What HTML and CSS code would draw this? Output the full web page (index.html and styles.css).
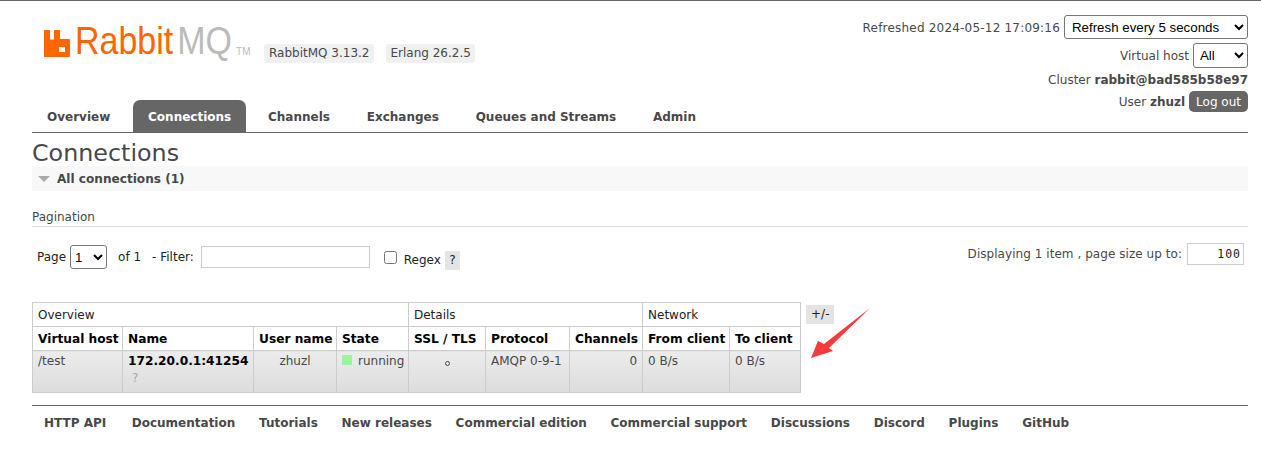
FILE: index.html
```html
<!DOCTYPE html>
<html lang="en">
<head>
    <meta charset="UTF-8">
    <title>RabbitMQ Management</title>
    <link rel="stylesheet" href="styles.css">
</head>
<body>
    <div class="header">
        <div class="brand">
            <div class="logo">
                <svg class="logo-mark" width="26" height="27" viewBox="0 3 26 27">
                    <path fill="#f60" fill-rule="evenodd" d="M0 3.500Q0 3 .5 3H5.500Q6 3 6 3.500V12.500H10V3.500Q10 3 10.500 3H15.500Q16 3 16 3.500V12H25.500Q26 12 26 12.500V29.500Q26 30 25.500 30H.5Q0 30 0 29.500ZM15 20V25H21V20Z"/>
                </svg>
                <span class="logo-word logo-rabbit">Rabbit</span>
                <span class="logo-word logo-mq">MQ</span>
                <span class="logo-tm">TM</span>
            </div>
            <span class="version">RabbitMQ 3.13.2</span>
            <span class="version">Erlang 26.2.5</span>
        </div>
        <div class="status">
            <div class="status-row">
                <span class="refreshed">Refreshed 2024-05-12 17:09:16</span>
                <select class="refresh-select"><option>Refresh every 5 seconds</option></select>
            </div>
            <div class="status-row">
                <span>Virtual host</span>
                <select class="vhost-select"><option>All</option></select>
            </div>
            <div class="status-row cluster-row">
                <span>Cluster <b>rabbit@bad585b58e97</b></span>
            </div>
            <div class="status-row user-row">
                <span>User <b>zhuzl</b></span>
                <button class="logout" type="button">Log out</button>
            </div>
        </div>
    </div>

    <!-- Navigation -->
    <div class="tabs">
        <a href="#">Overview</a>
        <a href="#" class="selected">Connections</a>
        <a href="#">Channels</a>
        <a href="#">Exchanges</a>
        <a href="#">Queues and Streams</a>
        <a href="#">Admin</a>
    </div>

    <div class="main">
        <h1>Connections</h1>
        <div class="section-title"><span class="triangle"></span>All connections (1)</div>

        <h3>Pagination</h3>
        <div class="pagination">
            <div class="page-left">
                <label class="page-label">Page</label>
                <select class="page-select"><option>1</option></select>
                <span class="page-of">of 1</span>
                <span class="page-filter">- Filter:</span>
                <input class="filter-input" type="text">
                <input class="regex-check" type="checkbox">
                <span class="regex-label">Regex</span>
                <span class="help">?</span>
            </div>
            <div class="page-right">
                <span class="page-count">Displaying 1 item , page size up to:</span>
                <input class="size-input" type="text" value="100">
            </div>
        </div>

        <div class="table-wrap">
            <table>
                <colgroup>
                    <col class="c-vhost"><col class="c-name"><col class="c-user"><col class="c-state">
                    <col class="c-ssl"><col class="c-proto"><col class="c-chan">
                    <col class="c-from"><col class="c-to">
                </colgroup>
                <thead>
                    <tr class="group-row">
                        <th colspan="4">Overview</th>
                        <th colspan="3">Details</th>
                        <th colspan="2">Network</th>
                    </tr>
                    <tr class="head-row">
                        <th>Virtual host</th>
                        <th>Name</th>
                        <th>User name</th>
                        <th>State</th>
                        <th>SSL / TLS</th>
                        <th>Protocol</th>
                        <th>Channels</th>
                        <th>From client</th>
                        <th>To client</th>
                    </tr>
                </thead>
                <tbody>
                    <tr>
                        <td>/test</td>
                        <td><b class="conn-name">172.20.0.1:41254</b><div class="conn-sub">?</div></td>
                        <td class="center">zhuzl</td>
                        <td><span class="state-dot"></span>running</td>
                        <td class="center"><span class="ssl-mark"></span></td>
                        <td>AMQP 0-9-1</td>
                        <td class="right">0</td>
                        <td>0 B/s</td>
                        <td>0 B/s</td>
                    </tr>
                </tbody>
            </table>
            <span class="plus-minus">+/-</span>
            <svg class="arrow" width="62" height="53" viewBox="0 0 62 53">
                <path fill="#f73a3a" d="M60 1L14 37L8 34L1 51L23 44L19 41Z"/>
            </svg>
        </div>
    </div>

    <div class="footer">
        <a href="#">HTTP API</a>
        <a href="#">Documentation</a>
        <a href="#">Tutorials</a>
        <a href="#">New releases</a>
        <a href="#">Commercial edition</a>
        <a href="#">Commercial support</a>
        <a href="#">Discussions</a>
        <a href="#">Discord</a>
        <a href="#">Plugins</a>
        <a href="#">GitHub</a>
    </div>
</body>
</html>
```

FILE: styles.css
```css
body {
    margin: 0;
    padding: 0;
    border-top: 1px solid #666;
    background-color: #fff;
    color: #484848;
    font-family: "DejaVu Sans", Verdana, sans-serif;
    font-size: 12px;
}
b {
    font-weight: bold;
}
.header {
    display: flex;
    justify-content: space-between;
    height: 99px;
    margin: 0 13px 0 32px;
}
.brand {
    display: flex;
    align-items: flex-start;
    padding-top: 26px;
}
.logo {
    display: flex;
    flex: none;
    align-items: flex-end;
    width: 208px;
    height: 30px;
    margin: 0 12px;
    font-family: "Liberation Sans", Arial, sans-serif;
}
.logo-mark {
    flex: none;
    margin-right: 5px;
}
.logo-word {
    font-size: 34px;
    line-height: 30px;
    height: 30px;
    transform: scaleY(1.120);
    transform-origin: 0 24px;
}
.logo-rabbit {
    color: #f60;
}
.logo-mq {
    margin-left: 4px;
    color: #bbb;
}
.logo-tm {
    margin: 0 0 0 4px;
    color: #bbb;
    font-size: 10px;
    line-height: 10px;
}
.version {
    margin: 17px 12px 0 0;
    padding: 2px 5px;
    line-height: 15px;
    background-color: #f0f0f0;
    border-radius: 3px;
}
.version + .version {
    padding: 2px 4px;
}
.status {
    display: flex;
    flex-direction: column;
    align-items: flex-end;
    padding-top: 12px;
}
.status-row {
    display: flex;
    flex: none;
    align-items: center;
    gap: 4px;
    height: 28px;
}
.status-row span {
    margin-top: 2px;
}
.refreshed {
    letter-spacing: .2px;
}
.cluster-row {
    height: 20px;
}
.user-row {
    height: 24px;
}
select {
    font-family: "Liberation Sans", Arial, sans-serif;
    font-size: 13.300px;
    color: #000;
    background-color: #fff;
    border: 1px solid #767676;
    border-radius: 3px;
}
.refresh-select {
    width: 184px;
    height: 24px;
    padding-left: 3px;
}
.vhost-select {
    width: 55px;
    height: 25px;
    padding-left: 2px;
}
.logout {
    height: 21px;
    margin-top: 1px;
    padding: 0 7px;
    border: none;
    border-radius: 5px;
    background-color: #666;
    color: #fff;
    font-family: "DejaVu Sans", Verdana, sans-serif;
    font-size: 12px;
}
.tabs {
    display: flex;
    height: 32px;
    margin: 0 13px 0 32px;
    border-bottom: 1px solid #666;
}
.tabs a {
    margin-right: 6.800px;
    padding: 0 15px;
    line-height: 35px;
    color: #484848;
    font-weight: bold;
    text-decoration: none;
    border-radius: 7px 7px 0 0;
}
.tabs a:first-child {
    padding-right: 16px;
}
.tabs a.selected {
    background-color: #666;
    color: #fff;
}
.main {
    margin: 0 13px 0 32px;
}
h1 {
    margin: 0;
    font-size: 23.800px;
    font-weight: normal;
    line-height: 40px;
    height: 33px;
}
.section-title {
    height: 25px;
    line-height: 27px;
    background-color: #f8f8f8;
    font-size: 12.100px;
    font-weight: bold;
}
.triangle {
    display: inline-block;
    margin: 0 7px 0 6px;
    border-style: solid;
    border-width: 6px 6px 0 6px;
    border-color: #aaa transparent transparent transparent;
    vertical-align: 1px;
}
h3 {
    margin: 19px 0 0 0;
    padding-bottom: 1px;
    height: 15px;
    font-size: 12px;
    font-weight: normal;
    line-height: 15px;
    border-bottom: 1px solid #ddd;
}
.pagination {
    display: flex;
    justify-content: space-between;
    align-items: center;
    height: 60px;
}
.page-left {
    display: flex;
    align-items: center;
    padding-left: 5px;
    color: #222;
}
.page-right {
    display: flex;
    align-items: center;
    gap: 5px;
    padding-right: 4px;
    margin-top: -6px;
}
.page-count {
    letter-spacing: .05px;
}
.page-select {
    width: 37px;
    height: 24px;
    margin-left: 4px;
}
.page-of {
    margin: -1px 0 0 11px;
}
.page-filter {
    margin: -1px 0 0 11px;
}
.filter-input {
    width: 165px;
    height: 18px;
    margin: 0 0 0 7px;
    padding: 1px;
    border: 1px solid #ccc;
}
.regex-check {
    width: 13px;
    height: 13px;
    margin: 0 0 0 14px;
}
.regex-label {
    margin: 6px 0 0 7px;
}
.help {
    margin: 6px 0 0 4px;
    padding: 0 4.500px;
    line-height: 19px;
    background-color: #e4e4e4;
}
.size-input {
    width: 51px;
    height: 18px;
    margin: 0;
    padding: 1px 2px;
    border: 1px solid #ccc;
    color: #222;
    text-align: right;
    font-family: "DejaVu Sans Mono", monospace;
    font-size: 11.500px;
    letter-spacing: 1px;
}
.table-wrap {
    position: relative;
    display: flex;
    align-items: flex-start;
    margin-top: 15px;
}
table {
    width: 768px;
    table-layout: fixed;
    border-collapse: collapse;
    border: 1px solid #ccc;
}
.c-vhost { width: 90px; }
.c-name { width: 131px; }
.c-user { width: 83px; }
.c-state { width: 72px; }
.c-ssl { width: 77px; }
.c-proto { width: 84px; }
.c-chan { width: 73px; }
.c-from { width: 87px; }
.c-to { width: 71px; }
th, td {
    padding: 0 5px;
    border: 1px solid #ccc;
    text-align: left;
    white-space: nowrap;
    overflow: hidden;
}
.group-row th {
    height: 23px;
    font-weight: normal;
    color: #222;
}
.head-row th {
    height: 23px;
    color: #000;
    font-weight: bold;
    font-size: 12.200px;
}
td {
    height: 39px;
    padding-top: 2px;
    vertical-align: top;
    line-height: 17px;
    background: linear-gradient(#ececec, #dcdcdc);
}
.center {
    text-align: center;
}
.right {
    text-align: right;
}
.conn-name {
    color: #000;
    font-size: 12.200px;
}
.conn-sub {
    padding-left: 4px;
    color: #aaa;
}
.state-dot {
    display: inline-block;
    width: 10px;
    height: 10px;
    margin-right: 6px;
    background-color: #98f898;
}
.ssl-mark {
    display: inline-block;
    width: 3px;
    height: 3px;
    border: 1px solid #484848;
    border-radius: 50%;
    vertical-align: -1px;
}
.plus-minus {
    margin: 3px 0 0 5px;
    padding: 0 5px;
    line-height: 19px;
    background-color: #e4e4e4;
    color: #222;
}
.arrow {
    position: absolute;
    left: 778px;
    top: 5px;
}
.footer {
    display: flex;
    gap: 23.750px;
    height: 33px;
    margin: 12px 13px 0 32px;
    padding-left: 12px;
    border-top: 1px solid #666;
    line-height: 35px;
}
.footer a {
    color: #484848;
    font-weight: bold;
    text-decoration: none;
}
.footer a:first-child {
    min-width: 64px;
}
```
